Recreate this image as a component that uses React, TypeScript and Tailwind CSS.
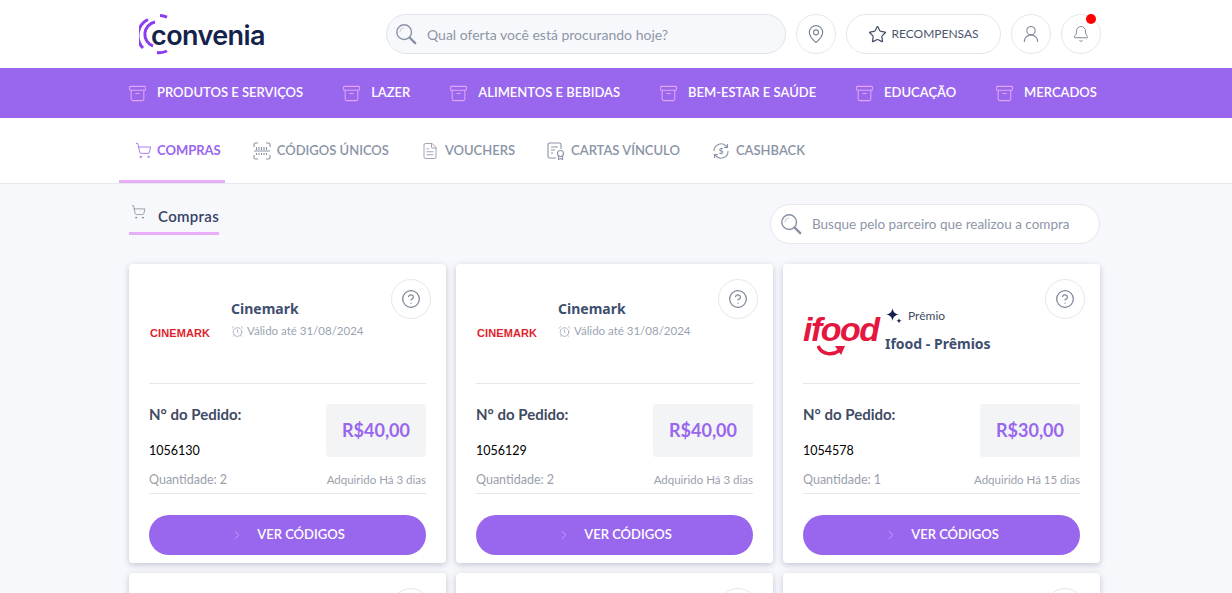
import { Star, MapPin, UserRound, Bell, ShoppingCart, ChevronRight, CircleHelp, AlarmClock, FileText, Archive } from "lucide-react";

const FONTE = "font-['Lato','Noto_Sans',sans-serif]";

const CATEGORIAS = ["PRODUTOS E SERVIÇOS", "LAZER", "ALIMENTOS E BEBIDAS", "BEM-ESTAR E SAÚDE", "EDUCAÇÃO", "MERCADOS"];

type Pedido = {
  parceiro: string;
  numero: string;
  valor: string;
  quantidade: number;
  adquirido: string;
  premio?: boolean;
};

const PEDIDOS: Pedido[] = [
  { parceiro: "Cinemark", numero: "1056130", valor: "R$40,00", quantidade: 2, adquirido: "Adquirido Há 3 dias" },
  { parceiro: "Cinemark", numero: "1056129", valor: "R$40,00", quantidade: 2, adquirido: "Adquirido Há 3 dias" },
  { parceiro: "Ifood - Prêmios", numero: "1054578", valor: "R$30,00", quantidade: 1, adquirido: "Adquirido Há 15 dias", premio: true },
];

function Lupa({ className }: { className?: string }) {
  return (
    <svg viewBox="0 0 24 24" fill="none" className={className}>
      <circle cx="10" cy="10" r="8" stroke="#8a93a6" strokeWidth="1.6" />
      <path d="M5.5 10a4.5 4.5 0 0 1 4.5-4.5" stroke="#c3c8d3" strokeWidth="1.2" />
      <path d="M16 16l6 6" stroke="#8a93a6" strokeWidth="2.6" strokeLinecap="round" />
    </svg>
  );
}

function Logo() {
  return (
    <div className="relative flex h-[42px] w-[126px] items-center">
      <svg viewBox="0 0 42 42" fill="none" className="absolute left-0 top-0 h-[42px] w-[42px]" stroke="#8b3cf0" strokeLinecap="butt">
        <path d="M22 2.5a18.5 18.5 0 0 1 7 1.6" strokeWidth="3" transform="translate(-1 0)" />
        <path d="M10 6.5A18 18 0 0 0 5 35" strokeWidth="3" transform="translate(-1 0)" />
        <path d="M19 39.5a18 18 0 0 0 10-1.5" strokeWidth="3" transform="translate(-1 0)" />
        <path d="M17 9a12.5 12.5 0 0 0-2 24" strokeWidth="3" transform="translate(-1 0)" />
      </svg>
      <span className="absolute left-[12px] top-[7px] font-['Inter',sans-serif] text-[27px] font-semibold leading-[32px] tracking-[-0.6px] text-[#14234b]">
        convenia
      </span>
    </div>
  );
}

function BotaoRedondo({ children, extra }: { children: React.ReactNode; extra?: React.ReactNode }) {
  return (
    <div className="relative flex h-10 w-10 items-center justify-center rounded-full border border-[#e5e7eb] bg-white">
      {children}
      {extra}
    </div>
  );
}

function IconeCodigos() {
  return (
    <svg viewBox="0 0 18 18" fill="none" stroke="#8a93a6" strokeWidth="1.1" className="h-[18px] w-[18px]">
      <path d="M1 5V2.5A1.5 1.5 0 0 1 2.5 1H5M13 1h2.500A1.500 1.500 0 0 1 17 2.500V5M1 13v2.500A1.500 1.500 0 0 0 2.500 17H5M13 17h2.500a1.500 1.500 0 0 0 1.500-1.500V13" />
      <path d="M1 9h16M3.500 5v3M6 5v3M8.500 5v3M11 5v3M13.500 5v3M3.500 11v2M6 11v2M8.500 11v2M11 11v2M13.500 11v2" />
    </svg>
  );
}

function IconeCarta() {
  return (
    <svg viewBox="0 0 18 18" fill="none" stroke="#8a93a6" strokeWidth="1.1" className="h-[18px] w-[18px]">
      <path d="M9 16H2.500A1.500 1.500 0 0 1 1 14.500V2.500A1.500 1.500 0 0 1 2.500 1h10A1.500 1.500 0 0 1 14 2.500V7" />
      <path d="M4 5h7M4 8h4M4 11h2" />
      <circle cx="13.500" cy="11.500" r="3" />
      <path d="M11.500 14v3.500l2-1 2 1V14" />
    </svg>
  );
}

function IconeCashback() {
  return (
    <svg viewBox="0 0 18 18" fill="none" stroke="#8a93a6" strokeWidth="1.1" className="h-[18px] w-[18px]">
      <path d="M2 9a7 7 0 0 1 12-5l1.500 1.500M16 9a7 7 0 0 1-12 5l-1.500-1.500" />
      <path d="M15.500 2v3.500H12M2.500 16v-3.500H6" />
      <text x="9" y="12" textAnchor="middle" fontSize="8" fontWeight="700" fill="#8a93a6" stroke="none" fontFamily="Lato, sans-serif">$</text>
    </svg>
  );
}

function Estrelinhas() {
  return (
    <svg viewBox="0 0 18 18" fill="#14234b" className="h-[18px] w-[18px]">
      <path d="M7.500 1c.6 4 2 5.600 6.500 6.500-4.500.9-5.900 2.500-6.500 6.500C6.900 10 5.500 8.400 1 7.500 5.500 6.600 6.900 5 7.500 1z" />
      <path d="M14 11c.2 1.700.9 2.400 2.800 2.800-1.900.4-2.600 1.100-2.800 2.800-.2-1.700-.9-2.400-2.800-2.800 1.900-.4 2.600-1.100 2.800-2.800z" />
    </svg>
  );
}

function CartaoPedido({ pedido }: { pedido: Pedido }) {
  return (
    <div className="relative w-[317px] shrink-0 rounded-[4px] bg-white px-5 pb-2 shadow-[0_2px_6px_rgba(60,70,100,0.28)]">
      <div className="absolute right-[15px] top-[15px]">
        <BotaoRedondo>
          <CircleHelp size={20} strokeWidth={1.5} className="text-[#7d8598]" />
        </BotaoRedondo>
      </div>

      <div className="flex h-[120px] border-b border-[#e5e7eb]">
        {pedido.premio ? (
          <>
            <div className="flex w-[82px] shrink-0 flex-col pt-[50px]">
              <span className="font-['Liberation_Sans',sans-serif] text-[34px] font-bold italic leading-[30px] tracking-[-1.5px] text-[#e5173f]">
                ifood
              </span>
              <svg viewBox="0 0 30 14" fill="none" className="ml-[14px] h-[14px] w-[30px]">
                <path d="M1 2c4 9 15 10 22 4" stroke="#e5173f" strokeWidth="3.500" />
                <path d="M18 2l10 0-4 9z" fill="#e5173f" />
              </svg>
            </div>
            <div className="flex flex-col pt-[43px] pl-[0px]">
              <div className="flex items-center gap-[5px]">
                <Estrelinhas />
                <span className="text-[12px] leading-[16px] text-[#3f4a63]">Prêmio</span>
              </div>
              <span className="mt-[10px] font-['Noto_Sans',sans-serif] text-[14px] font-bold leading-[18px] text-[#3f4f70]">{pedido.parceiro}</span>
            </div>
          </>
        ) : (
          <>
            <div className="flex w-[82px] shrink-0 pl-px pt-[61px]">
              <span className="font-['Liberation_Sans',sans-serif] text-[11px] font-bold leading-[16px] tracking-[0.1px] text-[#e01f2d]">CINEMARK</span>
            </div>
            <div className="flex flex-col pt-[35px]">
              <span className="font-['Noto_Sans',sans-serif] text-[14px] font-bold leading-[20px] text-[#3f4f70]">{pedido.parceiro}</span>
              <div className="mt-[4px] flex items-center gap-[3px]">
                <AlarmClock size={13} strokeWidth={1.2} className="text-[#8a93a6]" />
                <span className="text-[11.5px] leading-[16px] text-[#9aa3b2]">Válido até 31/08/2024</span>
              </div>
            </div>
          </>
        )}
      </div>

      <div className="flex h-[74px] justify-between pt-[20px]">
        <div className="flex flex-col">
          <span className="text-[15px] font-bold leading-[20px] text-[#3f4a63]">N° do Pedido:</span>
          <span className="mt-[18px] text-[12.5px] leading-[18px] text-black">{pedido.numero}</span>
        </div>
        <div className="flex h-[53px] w-[100px] items-center justify-center rounded-[3px] bg-[#f3f4f6] text-[18px] font-bold text-[#9966ee]">
          {pedido.valor}
        </div>
      </div>

      <div className="flex h-[36px] items-end justify-between border-b border-[#e5e7eb] pb-[5px]">
        <span className="text-[12.5px] leading-[16px] text-[#9aa0ab]">Quantidade: {pedido.quantidade}</span>
        <span className="text-[11.5px] leading-[16px] text-[#9aa0ab]">{pedido.adquirido}</span>
      </div>

      <button className="mt-[21px] flex h-10 w-full items-center justify-center gap-[13px] rounded-full bg-[#9966ee] text-[13px] font-semibold text-white">
        <ChevronRight size={14} strokeWidth={1} className="text-[#d9c8f8]" />
        VER CÓDIGOS
      </button>
    </div>
  );
}

export default function App() {
  return (
    <div className={`h-[593px] w-full overflow-hidden bg-[#f7f8fc] ${FONTE}`}>
      <header className="flex h-[68px] items-center bg-white pl-[139px] pr-[131px]">
        <Logo />
        <div className="ml-[121px] flex h-10 w-[400px] items-center gap-[10px] rounded-full border border-[#e2e5ec] bg-[#f7f8fc] pl-2">
          <Lupa className="h-[22px] w-[22px]" />
          <span className="text-[14px] text-[#8e96a6]">Qual oferta você está procurando hoje?</span>
        </div>
        <div className="ml-[10px] flex items-center gap-[10px]">
          <BotaoRedondo>
            <MapPin size={20} strokeWidth={1.4} className="text-[#7d8598]" />
          </BotaoRedondo>
          <div className="flex h-10 w-[155px] items-center justify-center gap-[4px] rounded-full border border-[#e5e7eb] bg-white">
            <Star size={19} strokeWidth={1.5} className="text-[#3f4a63]" />
            <span className="text-[12px] text-[#4b566e]">RECOMPENSAS</span>
          </div>
          <BotaoRedondo>
            <UserRound size={20} strokeWidth={1.3} className="text-[#7d8598]" />
          </BotaoRedondo>
          <BotaoRedondo extra={<span className="absolute right-[4px] top-[-1px] h-[10px] w-[10px] rounded-full bg-[#ff0000]" />}>
            <Bell size={18} strokeWidth={1.3} className="text-[#7d8598]" />
          </BotaoRedondo>
        </div>
      </header>

      <nav className="flex h-[50px] items-center justify-between bg-[#9966ee] pl-[128px] pr-[135px]">
        {CATEGORIAS.map((c) => (
          <div key={c} className="flex items-center gap-[10px]">
            <Archive size={19} strokeWidth={1.3} className="text-[#e5a4f5]" />
            <span className="text-[13px] font-semibold text-white">{c}</span>
          </div>
        ))}
      </nav>

      <div className="flex h-[66px] items-stretch gap-3 border-b border-[#e5e7eb] bg-white pl-[119px]">
        <div className="flex items-center gap-[5px] border-b-[3px] border-[#e9aefa] pl-4 pr-1 pt-[3px] text-[13px] font-bold text-[#9966ee]">
          <ShoppingCart size={17} strokeWidth={1.2} />
          COMPRAS
        </div>
        <div className="flex items-center gap-[6px] pl-4 pr-1 text-[13px] font-semibold text-[#8a93a6]">
          <IconeCodigos />
          CÓDIGOS ÚNICOS
        </div>
        <div className="flex items-center gap-[6px] pl-4 pr-1 text-[13px] font-semibold text-[#8a93a6]">
          <FileText size={18} strokeWidth={1.1} />
          VOUCHERS
        </div>
        <div className="flex items-center gap-[6px] pl-4 pr-1 text-[13px] font-semibold text-[#8a93a6]">
          <IconeCarta />
          CARTAS VÍNCULO
        </div>
        <div className="flex items-center gap-[6px] pl-4 pr-1 text-[13px] font-semibold text-[#8a93a6]">
          <IconeCashback />
          CASHBACK
        </div>
      </div>

      <main className="pl-[129px] pr-[132px]">
        <div className="flex h-[80px] items-start justify-between pt-5">
          <div className="flex h-[31px] w-[90px] items-start gap-[12px] border-b-[3px] border-[#e9aefa] pl-[2px]">
            <ShoppingCart size={16} strokeWidth={1} className="text-[#6b7280]" />
            <span className="whitespace-nowrap text-[15px] font-semibold leading-[25px] tracking-[0.3px] text-[#364263]">Compras</span>
          </div>
          <div className="flex h-10 w-[330px] items-center gap-[10px] rounded-full border border-[#e5e7eb] bg-white pl-[9px]">
            <Lupa className="h-[22px] w-[22px]" />
            <span className="whitespace-nowrap text-[13.5px] text-[#8e96a6]">Busque pelo parceiro que realizou a compra</span>
          </div>
        </div>
        <div className="flex flex-wrap gap-[10px]">
          {PEDIDOS.map((p) => (
            <CartaoPedido key={p.numero} pedido={p} />
          ))}
          {PEDIDOS.map((p) => (
            <CartaoPedido key={`${p.numero}-b`} pedido={p} />
          ))}
        </div>
      </main>
    </div>
  );
}
